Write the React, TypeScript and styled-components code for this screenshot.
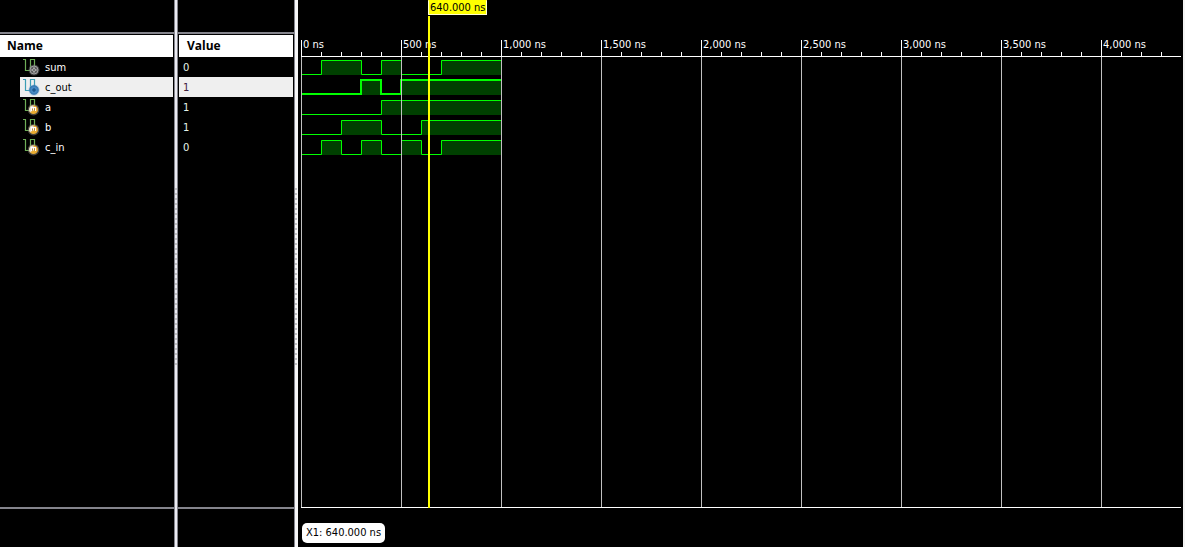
import React from "react";
import styled, { createGlobalStyle } from "styled-components";

const GlobalStyle = createGlobalStyle`
  * { box-sizing: border-box; }
  body {
    margin: 0;
    background: #000;
    color: #fff;
    font: 11px/14px "DejaVu Sans Condensed", "DejaVu Sans", sans-serif;
  }
`;

/* One 100 ns step of the time axis takes 20 pixels. */
const STEP = 20;

type Kind = "wire" | "output" | "input";

interface Signal {
  name: string;
  value: string;
  kind: Kind;
  selected?: boolean;
  levels: string;
}

const signals: Signal[] = [
  { name: "sum", value: "0", kind: "wire", levels: "0110100111" },
  { name: "c_out", value: "1", kind: "output", selected: true, levels: "0001011111" },
  { name: "a", value: "1", kind: "input", levels: "0000111111" },
  { name: "b", value: "1", kind: "input", levels: "0011001111" },
  { name: "c_in", value: "0", kind: "input", levels: "0101010111" },
];

const times = [0, 500, 1000, 1500, 2000, 2500, 3000, 3500, 4000];

const Viewer = styled.main`
  display: flex;
  min-height: 100vh;
  border-right: 2px solid #f4f4f4;
`;

const Pane = styled.section<{ $width: number }>`
  display: flex;
  flex-direction: column;
  flex: none;
  width: ${(p) => p.$width}px;
`;

const PaneTop = styled.div`
  height: 34px;
  border-bottom: 2px solid #84848c;
`;

const PaneBottom = styled.div`
  height: 40px;
  margin-top: auto;
  border-top: 2px solid #84848c;
`;

const Table = styled.table<{ $inset?: boolean }>`
  margin: 1px 1px 0 ${(p) => (p.$inset ? 1 : 0)}px;
  border-collapse: collapse;
`;

const HeadCell = styled.th<{ $indent: number }>`
  height: 22px;
  padding: 0 0 0 ${(p) => p.$indent}px;
  background: #fff;
  color: #000;
  font: bold 12px/20px "Open Sans", "Noto Sans", sans-serif;
  text-align: left;
`;

const Cell = styled.td`
  padding: 0;
`;

const NameLabel = styled.div<{ $selected?: boolean }>`
  display: flex;
  gap: 4px;
  height: 20px;
  margin-left: 20px;
  padding-left: 2px;
  background: ${(p) => (p.$selected ? "#efefef" : "#000")};
  color: ${(p) => (p.$selected ? "#000" : "#fff")};
  line-height: 22px;
`;

const ValueLabel = styled.div<{ $selected?: boolean }>`
  height: 20px;
  padding-left: 4px;
  background: ${(p) => (p.$selected ? "#efefef" : "#000")};
  color: ${(p) => (p.$selected ? "#402040" : "#e4f4e8")};
  font: 10px/22px "DejaVu Sans", sans-serif;
`;

const Splitter = styled.div<{ $last?: boolean }>`
  display: flex;
  align-items: center;
  flex: none;
  width: 4px;
  background: ${(p) => (p.$last ? "#f6f6f8" : "#ebebf2")};
  border-left: 1px solid #84848c;
  border-right: ${(p) => (p.$last ? "0" : "1px solid #84848c")};
`;

const Grip = styled.div`
  width: 2px;
  height: 180px;
  margin-top: 8px;
  background: repeating-linear-gradient(#c2c2c6 0 2px, transparent 2px 5px);
`;

const WavePane = styled.section`
  display: flex;
  flex-direction: column;
  flex: 1;
  min-width: 0;
  padding: 36px 2px 0 3px;
`;

const Plot = styled.div`
  position: relative;
  display: flex;
  flex-direction: column;
  flex: 1;
  border-bottom: 1px solid #fff;
`;

const Ruler = styled.div`
  display: flex;
  height: 21px;
  overflow: hidden;
  border-bottom: 1px solid #fff;
  background: repeating-linear-gradient(90deg, #fff 0 1px, transparent 1px ${STEP}px)
    0 100% / 100% 4px no-repeat;
`;

const RulerMark = styled.span`
  flex: none;
  width: ${STEP * 5}px;
  padding-left: 2px;
  background: linear-gradient(#fff, #fff) 0 100% / 1px 16px no-repeat;
  line-height: 17px;
  white-space: nowrap;
`;

const Waves = styled.div`
  position: relative;
  flex: 1;

  &::after {
    content: "";
    position: absolute;
    inset: 0;
    background: repeating-linear-gradient(90deg, #c0c0c0 0 1px, transparent 1px ${STEP * 5}px);
  }
`;

const Wave = styled.svg`
  display: block;
`;

const Cursor = styled.div`
  position: absolute;
  top: -20px;
  bottom: -1px;
  left: 127px;
  width: 2px;
  background: #ff0;
`;

const CursorTag = styled.div`
  position: absolute;
  top: -36px;
  left: 127px;
  height: 15px;
  padding: 0 1px;
  background: #ff0;
  border: 1px solid #ffffd0;
  border-top-color: #ff0;
  color: #000;
  line-height: 13px;
  white-space: nowrap;
`;

const Footer = styled.footer`
  height: 39px;
  padding: 15px 1px 0;
`;

const Chip = styled.output`
  display: inline-block;
  height: 20px;
  padding: 0 4px;
  border-radius: 5px;
  background: #fff;
  color: #000;
  line-height: 20px;
`;

function SignalIcon({ kind }: { kind: Kind }) {
  return (
    <svg width="19" height="20" viewBox="0 0 19 20" aria-hidden="true">
      <path
        d="M1 2.5H4M3.5 2.5V13.5H8.5V2.5H12.5V10"
        fill="none"
        stroke={kind === "output" ? "#3b9db4" : "#6fae58"}
        strokeWidth="1.2"
      />
      {kind === "wire" && (
        <>
          <circle cx="12" cy="13" r="5.5" fill="#777" opacity=".5" />
          <circle cx="12" cy="13" r="4" fill="#5c5c5c" stroke="#a0a0a0" />
          <path d="M12 10.5V15.5M9.5 13H14.5" fill="none" stroke="#f0f0f0" />
          <circle cx="12" cy="13" r="1" fill="#555" />
        </>
      )}
      {kind === "output" && (
        <>
          <circle cx="12" cy="13" r="5.5" fill="#5b9bd0" opacity=".5" />
          <circle cx="12" cy="13" r="4.2" fill="#4589c4" stroke="#2f70aa" />
          <path d="M12 11V15M10 13H14" fill="none" stroke="#124a80" />
        </>
      )}
      {kind === "input" && (
        <>
          <circle cx="11.5" cy="12.7" r="5.8" fill="#8c8880" opacity=".5" />
          <circle cx="11.5" cy="12.7" r="4.4" fill="#e9ac32" />
          <path d="M11.5 8.3A4.4 4.4 0 0 0 8 15.5L11.5 12.7Z" fill="#e4e0d8" />
          <path d="M9.5 14V10.5H13.5V14M11.5 10.5V13.5" fill="none" stroke="#fff" strokeWidth="1.2" />
          <path d="M10.5 11.5V13.5M12.5 11.5V13.5" fill="none" stroke="#a87420" strokeWidth=".8" />
        </>
      )}
    </svg>
  );
}

function SignalWave({ levels, selected }: Signal) {
  const thickness = selected ? 2 : 1;
  const offset = selected ? 0 : 0.5;
  const high = selected ? 3 : 3.5;
  const low = selected ? 17 : 17.5;
  const y = (level: string) => (level === "1" ? high : low);
  const width = levels.length * STEP;

  let line = `M0 ${y(levels[0])}`;
  [...levels].forEach((level, i) => {
    if (i > 0 && level !== levels[i - 1]) {
      line += `H${i * STEP + offset}V${y(level)}`;
    }
  });
  line += `H${width}`;

  return (
    <Wave width={width} height={STEP} viewBox={`0 0 ${width} ${STEP}`} aria-hidden="true">
      {[...levels].map(
        (level, i) =>
          level === "1" && (
            <rect key={i} x={i * STEP} y="3" width={STEP} height="15" fill="#004000" shapeRendering="crispEdges" />
          ),
      )}
      <path d={line} fill="none" stroke="#0f0" strokeWidth={thickness} />
    </Wave>
  );
}

export default function App() {
  return (
    <>
      <GlobalStyle />
      <Viewer>
        <Pane $width={174}>
          <PaneTop />
          <Table>
            <thead>
              <tr>
                <HeadCell scope="col" $indent={7}>Name</HeadCell>
              </tr>
            </thead>
            <tbody>
              {signals.map((s) => (
                <tr key={s.name}>
                  <Cell>
                    <NameLabel $selected={s.selected}>
                      <SignalIcon kind={s.kind} />
                      {s.name}
                    </NameLabel>
                  </Cell>
                </tr>
              ))}
            </tbody>
          </Table>
          <PaneBottom />
        </Pane>
        <Splitter>
          <Grip />
        </Splitter>
        <Pane $width={116}>
          <PaneTop />
          <Table $inset>
            <thead>
              <tr>
                <HeadCell scope="col" $indent={8}>Value</HeadCell>
              </tr>
            </thead>
            <tbody>
              {signals.map((s) => (
                <tr key={s.name}>
                  <Cell>
                    <ValueLabel $selected={s.selected}>{s.value}</ValueLabel>
                  </Cell>
                </tr>
              ))}
            </tbody>
          </Table>
          <PaneBottom />
        </Pane>
        <Splitter $last>
          <Grip />
        </Splitter>
        <WavePane>
          <Plot>
            <Ruler>
              {times.map((t) => (
                <RulerMark key={t}>{`${t.toLocaleString("en-US")} ns`}</RulerMark>
              ))}
            </Ruler>
            <Waves>
              {signals.map((s) => (
                <SignalWave key={s.name} {...s} />
              ))}
            </Waves>
            <Cursor />
            <CursorTag>640.000 ns</CursorTag>
          </Plot>
          <Footer>
            <Chip>X1: 640.000 ns</Chip>
          </Footer>
        </WavePane>
      </Viewer>
    </>
  );
}
